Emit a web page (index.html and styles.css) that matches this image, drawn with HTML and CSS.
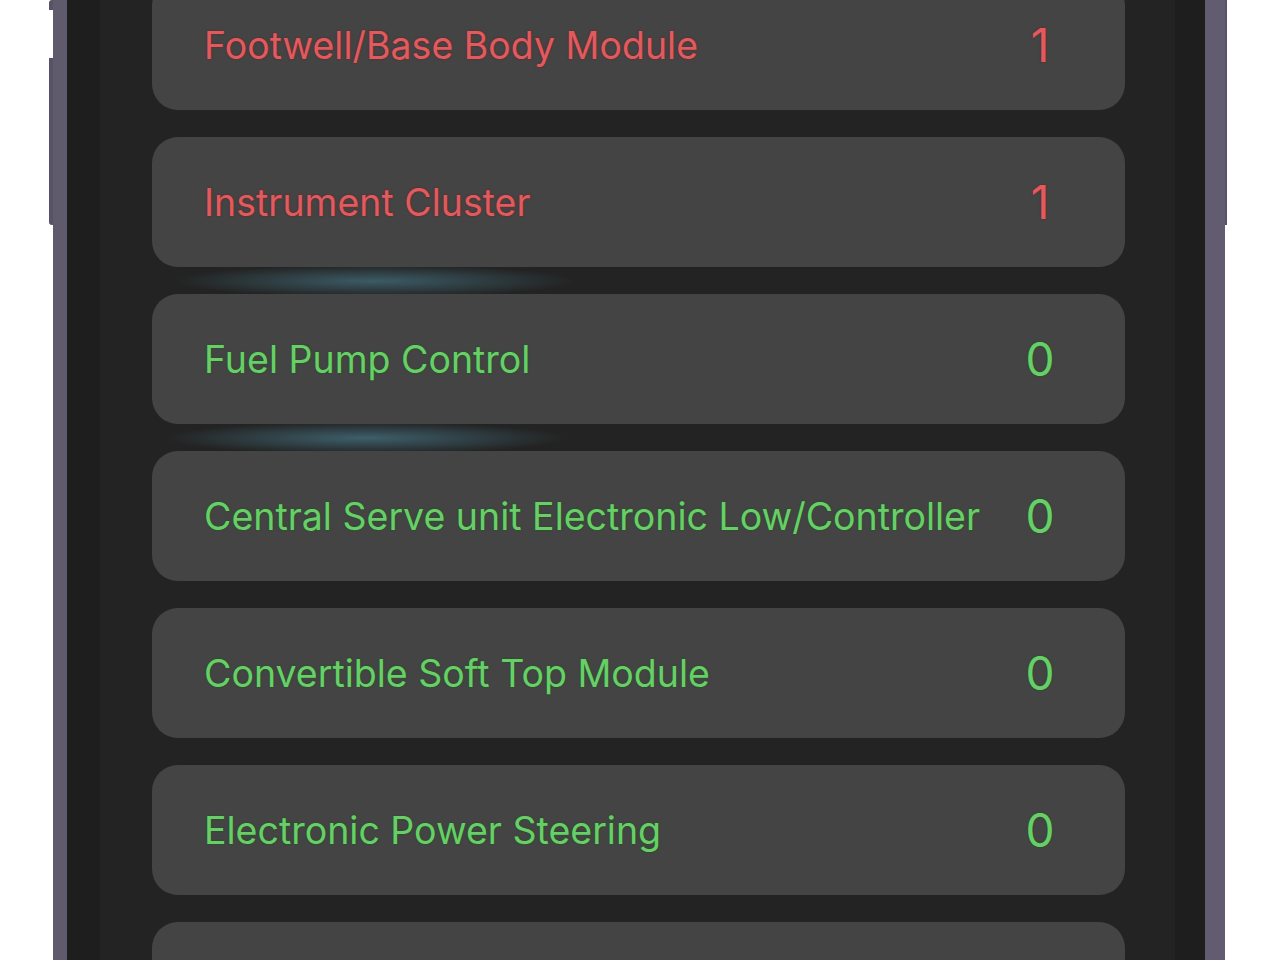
FILE: index.html
```html
<!DOCTYPE html>
<html lang="en">
<head>
    <meta charset="UTF-8">
    <meta name="viewport" content="width=device-width, initial-scale=1.0">
    <title>Modules</title>
    <link rel="stylesheet" href="styles.css">
</head>
<body>
    <div class="phone">
        <div class="bezel">
            <div class="screen">
                <ul class="modules">
                    <li class="module fault">
                        <span class="name">Footwell/Base Body Module</span>
                        <span class="count">1</span>
                    </li>
                    <li class="module fault">
                        <span class="name">Instrument Cluster</span>
                        <span class="count">1</span>
                    </li>
                    <li class="module ok">
                        <span class="name">Fuel Pump Control</span>
                        <span class="count">0</span>
                    </li>
                    <li class="module ok">
                        <span class="name">Central Serve unit Electronic Low/Controller</span>
                        <span class="count">0</span>
                    </li>
                    <li class="module ok">
                        <span class="name">Convertible Soft Top Module</span>
                        <span class="count">0</span>
                    </li>
                    <li class="module ok">
                        <span class="name">Electronic Power Steering</span>
                        <span class="count">0</span>
                    </li>
                    <li class="module ok">
                        <span class="name"></span>
                        <span class="count"></span>
                    </li>
                </ul>
            </div>
        </div>
    </div>
</body>
</html>
```

FILE: styles.css
```css
html, body {
    margin: 0;
    height: 960px;
    overflow: hidden;
    background: #fff;
}

.phone {
    position: relative;
    width: 1138px;
    height: 960px;
    margin-left: 53px;
    border-left: 14px solid #5f5a6c;
    border-right: 20px solid #615c70;
    box-shadow: inset 2px 0 0 #7a7588, inset -3px 0 0 #77728a;
}

/* side buttons */
.phone::before {
    content: '';
    position: absolute;
    left: -18px;
    top: 0;
    width: 4px;
    height: 225px;
    border-radius: 3px 0 0 3px;
    background: linear-gradient(to bottom, #57526a 0 10px, transparent 10px 58px, #57526a 58px);
}

.phone::after {
    content: '';
    position: absolute;
    right: -22px;
    top: 0;
    width: 2px;
    height: 225px;
    background: #57526a;
}

.bezel {
    height: 960px;
    padding: 0 30px 0 33px;
    background: #1e1e1e;
}

.screen {
    height: 960px;
    overflow: hidden;
    background:
        radial-gradient(ellipse 200px 16px at 275px 281px, rgba(70, 115, 130, 0.7), rgba(70, 115, 130, 0) 100%),
        radial-gradient(ellipse 200px 16px at 265px 438px, rgba(70, 115, 130, 0.75), rgba(70, 115, 130, 0) 100%),
        #232323;
}

.modules {
    list-style: none;
    margin: -20px 50px 0 52px;
    padding: 0;
    display: flex;
    flex-direction: column;
    gap: 27px;
}

.module {
    height: 130px;
    display: flex;
    align-items: center;
    padding: 0 62px 0 52px;
    background: #444444;
    border-radius: 26px;
    font-family: Inter, "Noto Sans", sans-serif;
    font-size: 37.5px;
}

.name {
    flex: 1;
}

.count {
    width: 46px;
    text-align: center;
    font-size: 46px;
}

.fault {
    color: #e05a5e;
    text-shadow: 0 0 2px rgba(110, 25, 30, 0.9);
}

.ok {
    color: #68cf68;
    text-shadow: 0 0 2px rgba(20, 90, 20, 0.9);
}
```
